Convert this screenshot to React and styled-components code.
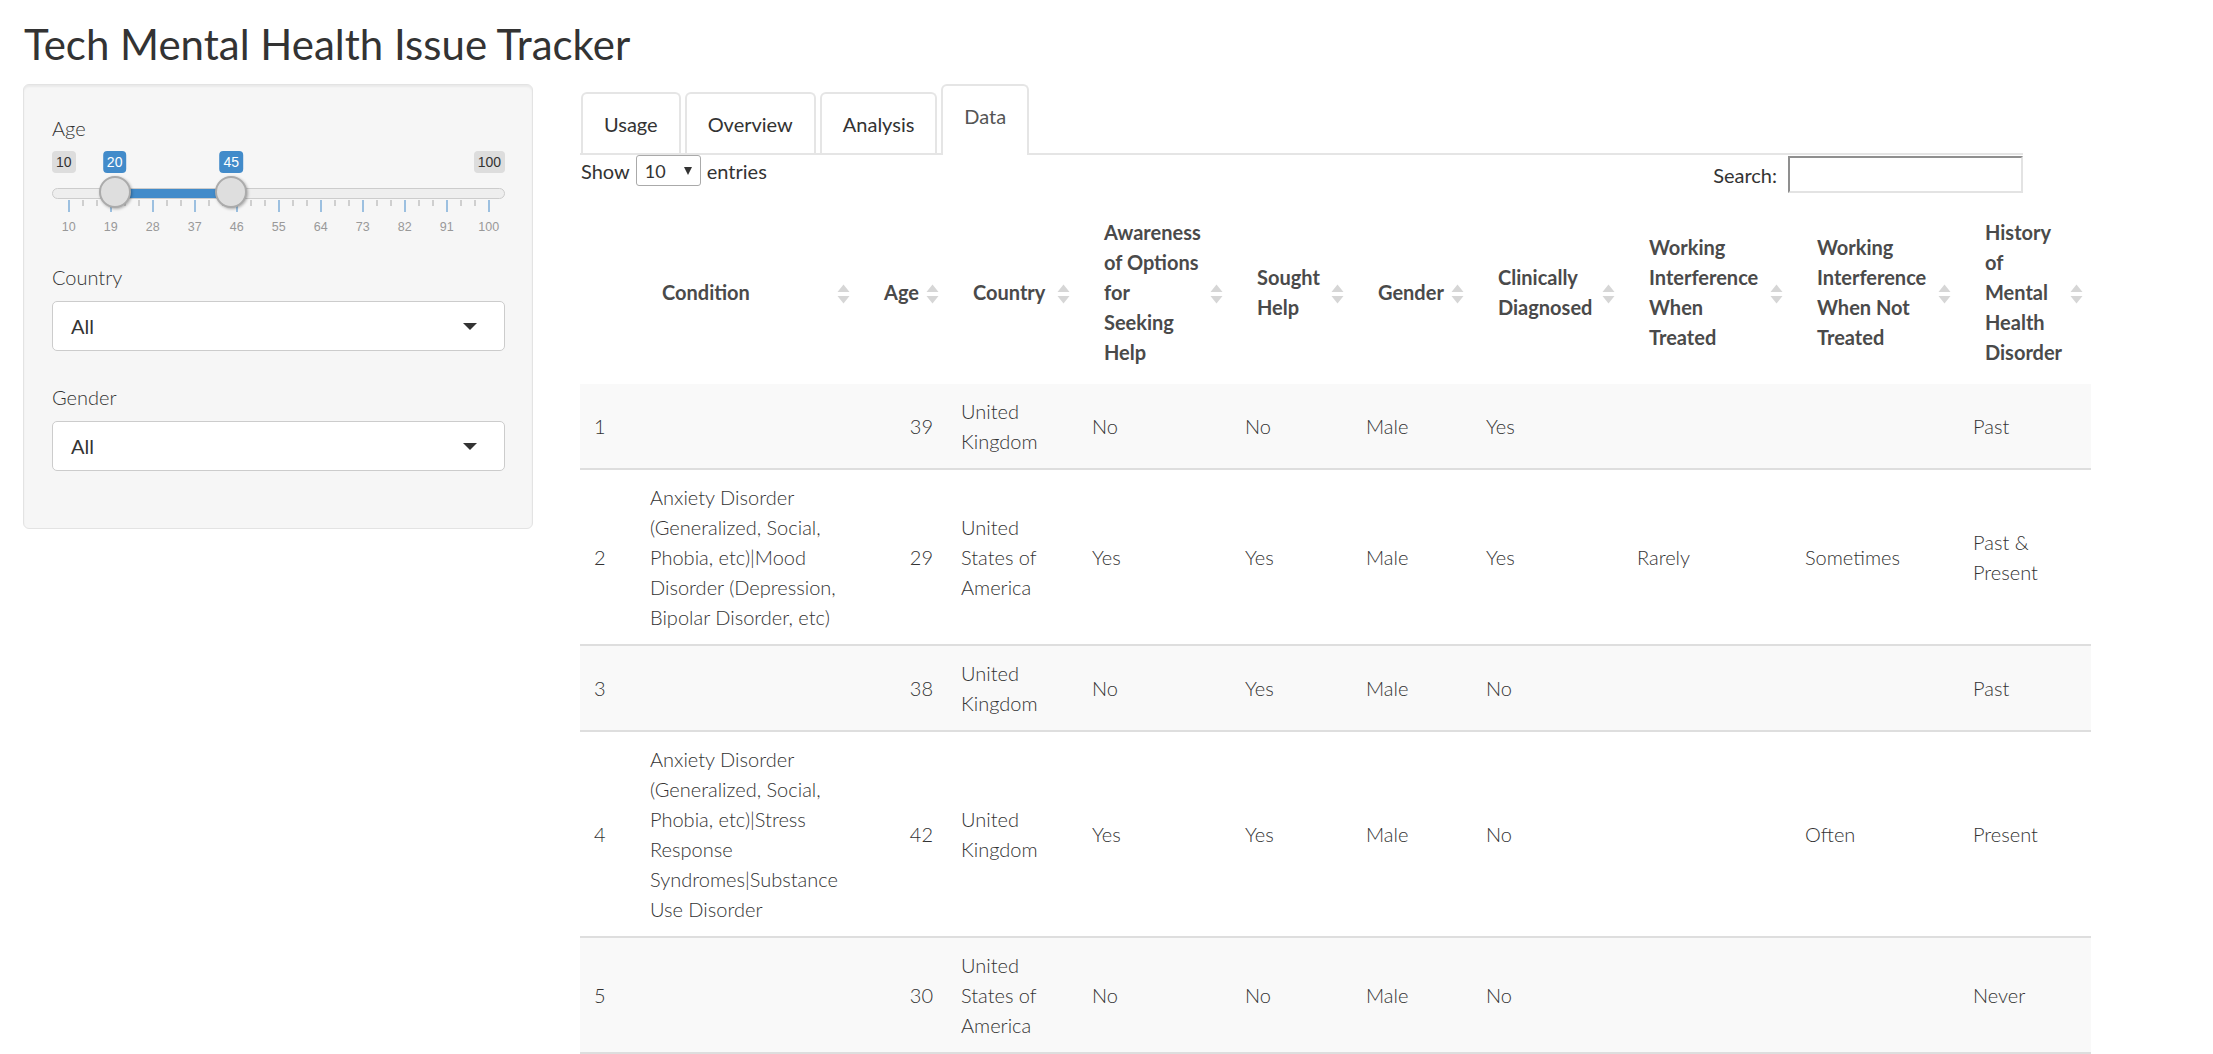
import React from 'react';
import styled, { createGlobalStyle } from 'styled-components';

const GlobalStyle = createGlobalStyle`
  html, body { margin: 0; padding: 0; background: #fff; overflow: hidden; }
  body {
    font-family: Lato, "Open Sans", "Noto Sans", sans-serif;
    color: #333;
    font-size: 20px;
    font-weight: 300;
  }
  * { box-sizing: border-box; }
`;

const Page = styled.div`
  padding: 0 23px;
`;

const Title = styled.h2`
  margin: 21px 0 17px 1px;
  font-size: 42px;
  line-height: 46px;
  font-weight: 400;
  color: #333;
`;

const Layout = styled.div`
  display: flex;
  align-items: flex-start;
  gap: 47px;
`;

const Well = styled.div`
  flex: 0 0 510px;
  width: 510px;
  background: #f6f6f6;
  border: 1px solid #e3e3e3;
  border-radius: 6px;
  box-shadow: inset 0 2px 2px rgba(0, 0, 0, 0.05);
  padding: 29px 27px 25px 28px;
`;

const FormGroup = styled.div`
  display: flex;
  flex-direction: column;
  margin-bottom: 21px;
`;

const Label = styled.div`
  font-size: 20px;
  line-height: 28px;
  margin-bottom: 7px;
  font-weight: 300;
  color: #333;
`;

/* ---------- range slider ---------- */
const SliderBox = styled.div`
  position: relative;
  height: 95px;
  margin-top: -2px;
`;

const Track = styled.div`
  position: absolute;
  left: 0;
  right: 0;
  top: 41px;
  height: 11px;
  border-radius: 6px;
  background: #eeeeee;
  border: 1.5px solid #cccccc;
`;

const Bar = styled.div`
  position: absolute;
  top: 42px;
  height: 9px;
  background: #428bca;
`;

const Handle = styled.div`
  position: absolute;
  top: 29px;
  width: 32px;
  height: 32px;
  margin-left: -16px;
  border-radius: 50%;
  background: #dedede;
  border: 2px solid #ababab;
  box-shadow: 1px 1px 3px rgba(0, 0, 0, 0.3);
`;

const ValueTag = styled.span`
  position: absolute;
  top: 4px;
  height: 22px;
  line-height: 22px;
  padding: 0 4px;
  border-radius: 4px;
  font-family: "Liberation Sans", Arial, sans-serif;
  font-size: 14px;
  font-weight: 400;
  background: ${(p) => (p.$accent ? '#428bca' : 'rgba(0,0,0,0.1)')};
  color: ${(p) => (p.$accent ? '#fff' : '#333')};
  transform: ${(p) => (p.$edge ? 'none' : 'translateX(-50%)')};
`;

const Tick = styled.span`
  position: absolute;
  top: 53px;
  width: 1.5px;
  height: ${(p) => (p.$major ? '12px' : '6px')};
  background: ${(p) => (p.$major ? '#9cc0e0' : '#cfcfcf')};
`;

const GridLabel = styled.span`
  position: absolute;
  top: 72px;
  line-height: 16px;
  transform: translateX(-50%);
  font-family: "Liberation Sans", Arial, sans-serif;
  font-size: 12.5px;
  font-weight: 400;
  color: #999;
`;

/* ---------- select ---------- */
const SelectBox = styled.div`
  height: 50px;
  border: 1.5px solid #cccccc;
  border-radius: 5px;
  background: #fff;
  padding: 0 18px;
  display: flex;
  align-items: center;
  justify-content: space-between;
  font-size: 20px;
  font-weight: 400;
  color: #333;
  margin: 3px 0 11px;
`;

const Caret = styled.span`
  width: 0;
  height: 0;
  border-left: 7px solid transparent;
  border-right: 7px solid transparent;
  border-top: 7px solid #333;
  margin-right: 9px;
`;

/* ---------- main ---------- */
const Main = styled.div`
  flex: 0 0 1443px;
  width: 1443px;
`;

const TabBar = styled.div`
  display: flex;
  align-items: flex-end;
  gap: 4px;
  padding-left: 1px;
  border-bottom: 2px solid #e5e5e5;
`;

const Tab = styled.div`
  border: 2px solid #e5e5e5;
  border-bottom: none;
  border-radius: 6px 6px 0 0;
  padding: 16px 21px ${(p) => (p.$active ? '25px' : '15px')};
  margin-bottom: ${(p) => (p.$active ? '-2px' : '0')};
  background: #fff;
  font-size: 20px;
  line-height: 28px;
  font-weight: 400;
  color: ${(p) => (p.$active ? '#555' : '#333')};
`;

const Toolbar = styled.div`
  display: flex;
  justify-content: space-between;
  align-items: flex-start;
  height: 49px;
  font-size: 20px;
  font-weight: 400;
  color: #333;
`;

const LengthControl = styled.div`
  display: flex;
  align-items: center;
  gap: 6px;
  height: 31px;
  padding-left: 1px;
`;

const LengthSelect = styled.div`
  width: 65px;
  height: 31px;
  border: 1px solid #aaa;
  border-radius: 3px;
  display: flex;
  align-items: center;
  justify-content: space-between;
  padding: 0 8px 0 8px;
  font-size: 18px;
`;

const SmallCaret = styled.span`
  width: 0;
  height: 0;
  border-left: 4px solid transparent;
  border-right: 4px solid transparent;
  border-top: 8px solid #333;
`;

const SearchControl = styled.div`
  display: flex;
  align-items: center;
  gap: 11px;
  height: 37px;
  margin-top: 1px;
`;

const SearchInput = styled.div`
  width: 235px;
  height: 37px;
  border-top: 2px solid #8f8f8f;
  border-left: 2px solid #8f8f8f;
  border-bottom: 2px solid #e3e3e3;
  border-right: 2px solid #e3e3e3;
  background: #fff;
`;

const Table = styled.table`
  width: 1511px;
  table-layout: fixed;
  border-collapse: separate;
  border-spacing: 0;
`;

const Th = styled.th`
  position: relative;
  padding: 13px 28px 17px 26px;
  font-size: 20px;
  line-height: 30px;
  font-weight: 700;
  color: #4a4a4a;
  text-align: ${(p) => (p.$right ? 'right' : 'left')};
  vertical-align: middle;
  white-space: pre-line;
`;

const SortGlyph = styled.svg`
  position: absolute;
  right: 8px;
  top: 50%;
  transform: translateY(-50%);
`;

const Tr = styled.tr`
  background: ${(p) => (p.$odd ? '#f9f9f9' : '#fff')};
`;

const Td = styled.td`
  padding: 12px 14px;
  font-size: 20px;
  line-height: 30px;
  font-weight: 300;
  color: #333;
  border-bottom: 2px solid #dedede;
  text-align: ${(p) => (p.$right ? 'right' : 'left')};
  vertical-align: middle;
  white-space: pre-line;
`;

const SortIcon = () => (
  <SortGlyph width="13" height="20" viewBox="0 0 13 20">
    <path d="M6.5 0.5 L12.5 8 L0.5 8 Z" fill="#d6d6d6" />
    <path d="M0.5 12 L12.5 12 L6.5 19.5 Z" fill="#d6d6d6" />
  </SortGlyph>
);

const columns = [
  { key: 'idx', w: 56, label: '', sortable: false },
  { key: 'cond', w: 222, label: 'Condition' },
  { key: 'age', w: 89, label: 'Age', right: true },
  { key: 'country', w: 131, label: 'Country' },
  { key: 'aware', w: 153, label: 'Awareness\nof Options\nfor\nSeeking\nHelp' },
  { key: 'sought', w: 121, label: 'Sought\nHelp' },
  { key: 'gender', w: 120, label: 'Gender' },
  { key: 'clin', w: 151, label: 'Clinically\nDiagnosed' },
  { key: 'wt', w: 168, label: 'Working\nInterference\nWhen\nTreated' },
  { key: 'wnt', w: 168, label: 'Working\nInterference\nWhen Not\nTreated' },
  { key: 'hist', w: 132, label: 'History\nof\nMental\nHealth\nDisorder' },
];

const rows = [
  ['1', '', '39', 'United\nKingdom', 'No', 'No', 'Male', 'Yes', '', '', 'Past'],
  [
    '2',
    'Anxiety Disorder\n(Generalized, Social,\nPhobia, etc)|Mood\nDisorder (Depression,\nBipolar Disorder, etc)',
    '29',
    'United\nStates of\nAmerica',
    'Yes',
    'Yes',
    'Male',
    'Yes',
    'Rarely',
    'Sometimes',
    'Past &\nPresent',
  ],
  ['3', '', '38', 'United\nKingdom', 'No', 'Yes', 'Male', 'No', '', '', 'Past'],
  [
    '4',
    'Anxiety Disorder\n(Generalized, Social,\nPhobia, etc)|Stress\nResponse\nSyndromes|Substance\nUse Disorder',
    '42',
    'United\nKingdom',
    'Yes',
    'Yes',
    'Male',
    'No',
    '',
    'Often',
    'Present',
  ],
  ['5', '', '30', 'United\nStates of\nAmerica', 'No', 'No', 'Male', 'No', '', '', 'Never'],
];

const SLIDER = { min: 10, max: 100, from: 20, to: 45, x0: 16, x1: 436 };
const valX = (v) => SLIDER.x0 + ((v - SLIDER.min) / (SLIDER.max - SLIDER.min)) * (SLIDER.x1 - SLIDER.x0);

const RangeSlider = () => {
  const ticks = [];
  for (let i = 0; i <= 30; i++) ticks.push(i);
  const labels = [10, 19, 28, 37, 46, 55, 64, 73, 82, 91, 100];
  const a = valX(SLIDER.from);
  const b = valX(SLIDER.to);
  return (
    <SliderBox>
      <ValueTag $edge style={{ left: 0 }}>10</ValueTag>
      <ValueTag $edge style={{ right: 0 }}>100</ValueTag>
      <ValueTag $accent style={{ left: a }}>20</ValueTag>
      <ValueTag $accent style={{ left: b }}>45</ValueTag>
      <Track />
      <Bar style={{ left: a, width: b - a }} />
      {ticks.map((i) => (
        <Tick key={i} $major={i % 3 === 0} style={{ left: SLIDER.x0 + i * 14 }} />
      ))}
      {labels.map((l, i) => (
        <GridLabel key={l} style={{ left: SLIDER.x0 + i * 42 + 0.75 }}>{l}</GridLabel>
      ))}
      <Handle style={{ left: a }} />
      <Handle style={{ left: b }} />
    </SliderBox>
  );
};

export default function App() {
  return (
    <>
      <GlobalStyle />
      <Page>
        <Title>Tech Mental Health Issue Tracker</Title>
        <Layout>
          <Well>
            <FormGroup>
              <Label>Age</Label>
              <RangeSlider />
            </FormGroup>
            <FormGroup>
              <Label>Country</Label>
              <SelectBox>
                <span>All</span>
                <Caret />
              </SelectBox>
            </FormGroup>
            <FormGroup>
              <Label>Gender</Label>
              <SelectBox>
                <span>All</span>
                <Caret />
              </SelectBox>
            </FormGroup>
          </Well>
          <Main>
            <TabBar>
              <Tab>Usage</Tab>
              <Tab>Overview</Tab>
              <Tab>Analysis</Tab>
              <Tab $active>Data</Tab>
            </TabBar>
            <Toolbar>
              <LengthControl>
                <span>Show</span>
                <LengthSelect>
                  <span>10</span>
                  <SmallCaret />
                </LengthSelect>
                <span>entries</span>
              </LengthControl>
              <SearchControl>
                <span>Search:</span>
                <SearchInput />
              </SearchControl>
            </Toolbar>
            <Table>
              <colgroup>
                {columns.map((c) => (
                  <col key={c.key} style={{ width: c.w }} />
                ))}
              </colgroup>
              <thead>
                <tr>
                  {columns.map((c) => (
                    <Th key={c.key} $right={c.right}>
                      {c.label}
                      {c.sortable !== false && <SortIcon />}
                    </Th>
                  ))}
                </tr>
              </thead>
              <tbody>
                {rows.map((r, ri) => (
                  <Tr key={ri} $odd={ri % 2 === 0}>
                    {r.map((cell, ci) => (
                      <Td key={ci} $right={columns[ci].right}>
                        {cell}
                      </Td>
                    ))}
                  </Tr>
                ))}
              </tbody>
            </Table>
          </Main>
        </Layout>
      </Page>
    </>
  );
}
